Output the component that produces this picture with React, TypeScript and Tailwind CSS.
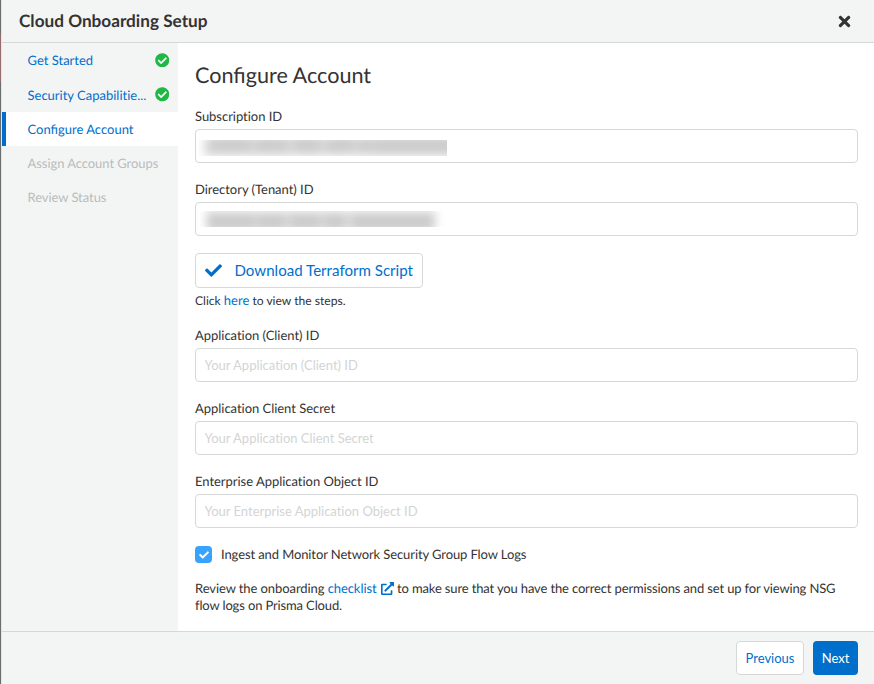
import { FaCheck, FaCheckCircle, FaExternalLinkAlt, FaTimes } from "react-icons/fa";

type Blob = { left: number; width: number; top: number; height: number };

function Step({ label, state }: { label: string; state: "done" | "active" | "todo" }) {
  if (state === "active") {
    return (
      <li className="flex h-[34px] items-center border-l-4 border-[#006fcc] bg-white pl-[21.5px] pt-px text-[#006fcc] [font-variant-ligatures:common-ligatures]">{label}</li>
    );
  }
  return (
    <li className={`flex h-[34.4px] items-center justify-between pl-[25.5px] pr-[9px] ${state === "done" ? "text-[#006fcc]" : "tracking-[-0.06px] text-[#b9bcbc]"}`}>
      <span className="pt-[1.4px]">{label}</span>
      {state === "done" && <FaCheckCircle className="size-[14.5px] text-[#1fb845]" />}
    </li>
  );
}

function Redacted({ blobs, className }: { blobs: Blob[]; className: string }) {
  return (
    <div className={`relative h-4 overflow-hidden ${className}`}>
      {blobs.map((b) => (
        <span
          key={b.left}
          className="absolute bg-[#b4b4b4] opacity-45 blur-[5px]"
          style={{ left: b.left, width: b.width, top: b.top, height: b.height }}
        />
      ))}
    </div>
  );
}

function Field({ label, placeholder, children }: { label: string; placeholder?: string; children?: React.ReactNode }) {
  return (
    <div className="h-[73px]">
      <div className="h-[21px] leading-[17px] tracking-[-0.03px]">{label}</div>
      {placeholder ? (
        <input
          className="block h-[34px] w-full rounded border border-[#d6d8d8] bg-white px-[8.5px] text-[13px] tracking-[-0.01px] outline-none placeholder:text-[#d3d5d5]"
          placeholder={placeholder}
        />
      ) : (
        <div className="flex h-[34px] w-full items-center rounded border border-[#d6d8d8] bg-white">{children}</div>
      )}
    </div>
  );
}

const subscription: Blob[] = [
  { left: 6, width: 255, top: -4, height: 20 },
  { left: 12, width: 42, top: -1, height: 12 },
  { left: 57, width: 33, top: -1, height: 12 },
  { left: 95, width: 28, top: -1, height: 12 },
  { left: 128, width: 29, top: -1, height: 12 },
  { left: 160, width: 14, top: -1, height: 12 },
  { left: 175, width: 82, top: -1, height: 13 },
];
const tenant: Blob[] = [
  { left: 6, width: 230, top: 0, height: 20 },
  { left: 9, width: 46, top: 4, height: 14 },
  { left: 57, width: 28, top: 4, height: 14 },
  { left: 90, width: 30, top: 4, height: 14 },
  { left: 124, width: 21, top: 4, height: 14 },
  { left: 152, width: 80, top: 4, height: 14 },
];

export default function App() {
  return (
    <div className="flex h-[684px] w-[874px] bg-[#e4e6e6] font-['Lato',sans-serif] text-[13px] text-[#333] [font-variant-ligatures:no-common-ligatures] [text-rendering:geometricPrecision]">
      <div className="flex w-px shrink-0 flex-col bg-[#6b6c6d]">
        <div className="mt-[33px] h-[49px] bg-[#946e6d]" />
      </div>
      <div className="ml-px flex min-w-0 flex-1 flex-col overflow-hidden bg-[#f3f5f5]">
        <header className="flex h-[43px] shrink-0 items-center justify-between border-b border-[#d6d8d8] pl-[17px] pr-[21px]">
          <h1 className="text-[17.2px] font-bold">Cloud Onboarding Setup</h1>
          <FaTimes className="size-[17px]" />
        </header>
        <div className="flex min-h-0 flex-1">
          <nav className="w-44 shrink-0">
            <ul>
              <Step label="Get Started" state="done" />
              <Step label="Security Capabilitie..." state="done" />
              <Step label="Configure Account" state="active" />
              <Step label="Assign Account Groups" state="todo" />
              <Step label="Review Status" state="todo" />
            </ul>
          </nav>
          <main className="flex-1 bg-white pl-[17px] pr-4 pt-4">
            <h2 className="mb-[17px] h-8 text-[21.6px] leading-8 [font-variant-ligatures:common-ligatures]">Configure Account</h2>
            <Field label="Subscription ID">
              <Redacted blobs={subscription} className="ml-0.5 mt-[3px] w-[249px]" />
            </Field>
            <Field label="Directory (Tenant) ID">
              <Redacted blobs={tenant} className="ml-1 mt-[-1px] w-[246px]" />
            </Field>
            <button className="mt-[-1px] flex h-[35px] w-[228px] items-center rounded border border-[#d6d8d8] pl-[9px] text-[15.1px] text-[#006fcc]">
              <FaCheck className="mr-[12.5px] size-[17px]" />
              Download Terraform Script
            </button>
            <p className="mb-[18px] mt-1 h-[17px] text-[12.1px] leading-[17px]">
              Click <a className="text-[13px] text-[#006fcc]">here</a> to view the steps.
            </p>
            <Field label="Application (Client) ID" placeholder="Your Application (Client) ID" />
            <Field label="Application Client Secret" placeholder="Your Application Client Secret" />
            <Field label="Enterprise Application Object ID" placeholder="Your Enterprise Application Object ID" />
            <label className="flex h-[17px] items-center gap-[9px] tracking-[-0.1px]">
              <span className="flex size-[17px] items-center justify-center rounded-sm bg-[#37a3ff] text-white">
                <FaCheck className="size-2.5" />
              </span>
              Ingest and Monitor Network Security Group Flow Logs
            </label>
            <p className="mt-[17px] leading-[17px] tracking-[-0.14px]">
              <span className="tracking-[-0.08px]">Review the onboarding </span>
              <a className="tracking-[-0.08px] text-[#006fcc]">
                checklist <FaExternalLinkAlt className="ml-px inline size-[13px] align-[-2px]" />
              </a>{" "}
              to make sure that you have the correct permissions and set up for viewing NSG flow logs on Prisma Cloud.
            </p>
          </main>
        </div>
        <footer className="flex h-[53px] shrink-0 items-center justify-end gap-[9px] border-t border-[#d6d8d8] pr-4">
          <button className="h-[34px] w-[68px] rounded border border-[#d6d8d8] bg-white pt-px text-[#006fcc]">Previous</button>
          <button className="h-[34px] w-[45px] rounded bg-[#006fcc] pt-px text-white">Next</button>
        </footer>
      </div>
    </div>
  );
}
